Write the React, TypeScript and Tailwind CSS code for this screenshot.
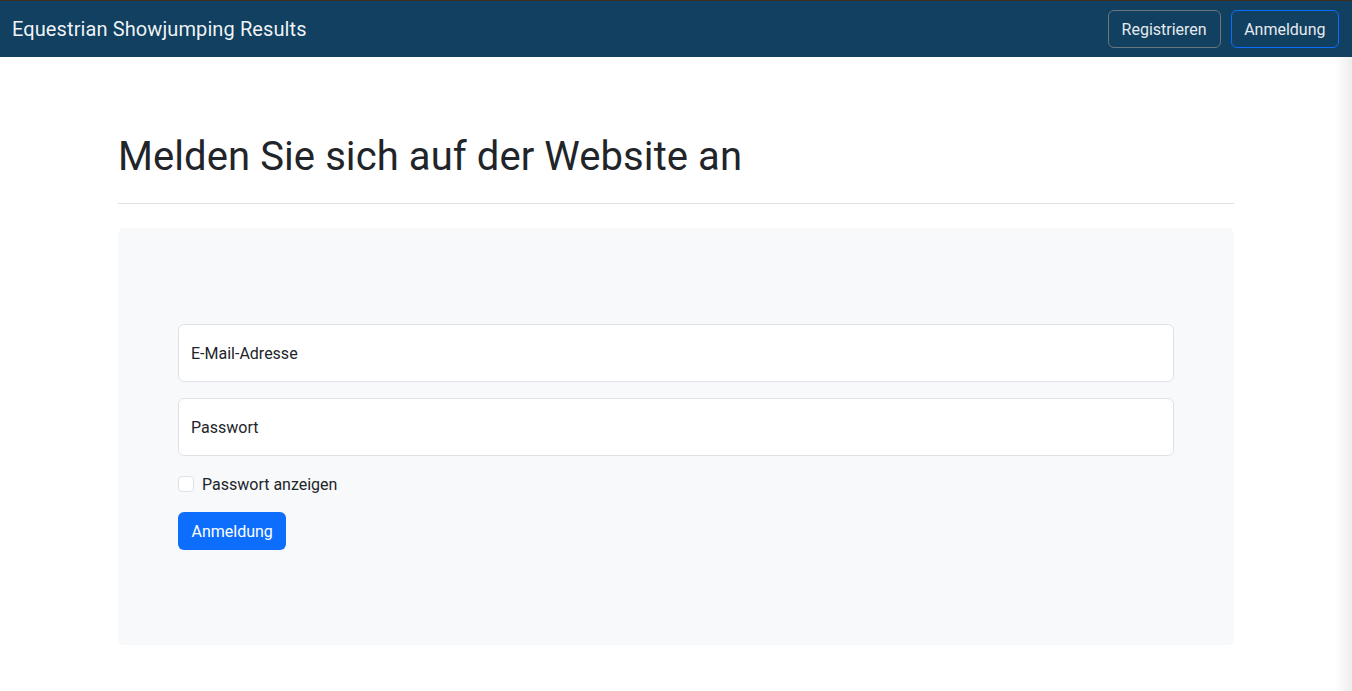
import React from "react";

export default function App() {
  return (
    <div className="relative min-h-[691px] bg-white text-[#212529] font-['Roboto','Liberation_Sans',sans-serif]">
      <nav className="h-[57px] bg-[#114061] border-t border-[#3b2f22] flex items-center justify-between pl-3 pr-[13px]">
        <span className="text-[20px] text-white/95 leading-[30px] tracking-[0.005em]">Equestrian Showjumping Results</span>
        <div className="flex items-center gap-[10px]">
          <button className="h-[38px] px-[13px] rounded-[6px] border border-[#6c757d] text-[16px] text-[#e6eaee] pt-px">Registrieren</button>
          <button className="h-[38px] px-[12.5px] rounded-[6px] border border-[#0d6efd] text-[16px] text-[#e6eaee] pt-px">Anmeldung</button>
        </div>
      </nav>
      <main className="w-[1116px] mx-auto">
        <h1 className="mt-[76px] text-[40px] leading-[48px] font-normal tracking-[0.002em]">Melden Sie sich auf der Website an</h1>
        <hr className="mt-[22px] border-t border-[#dee2e6]" />
        <div className="mt-[24px] bg-[#f8f9fa] rounded-[6px] px-[60px] pt-[96px] pb-[95px] flex flex-col gap-4">
          <div className="h-[58px] bg-white border border-[#dee2e6] rounded-[6px] flex items-center px-3 pt-[2px] text-[16px]">E-Mail-Adresse</div>
          <div className="h-[58px] bg-white border border-[#dee2e6] rounded-[6px] flex items-center px-3 pt-[2px] text-[16px]">Passwort</div>
          <label className="flex items-center gap-2 h-6 text-[16px]">
            <span className="w-4 h-4 bg-white border border-[#dee2e6] rounded-[4px]" />
            <span className="pt-[2px]">Passwort anzeigen</span>
          </label>
          <div>
            <button className="h-[38px] px-[13.5px] rounded-[6px] bg-[#0d6efd] text-white text-[16px] pt-px">Anmeldung</button>
          </div>
        </div>
      </main>
      <div className="absolute right-0 top-[57px] bottom-0 w-[18px] bg-gradient-to-r from-transparent to-black/[0.07] pointer-events-none" />
    </div>
  );
}
